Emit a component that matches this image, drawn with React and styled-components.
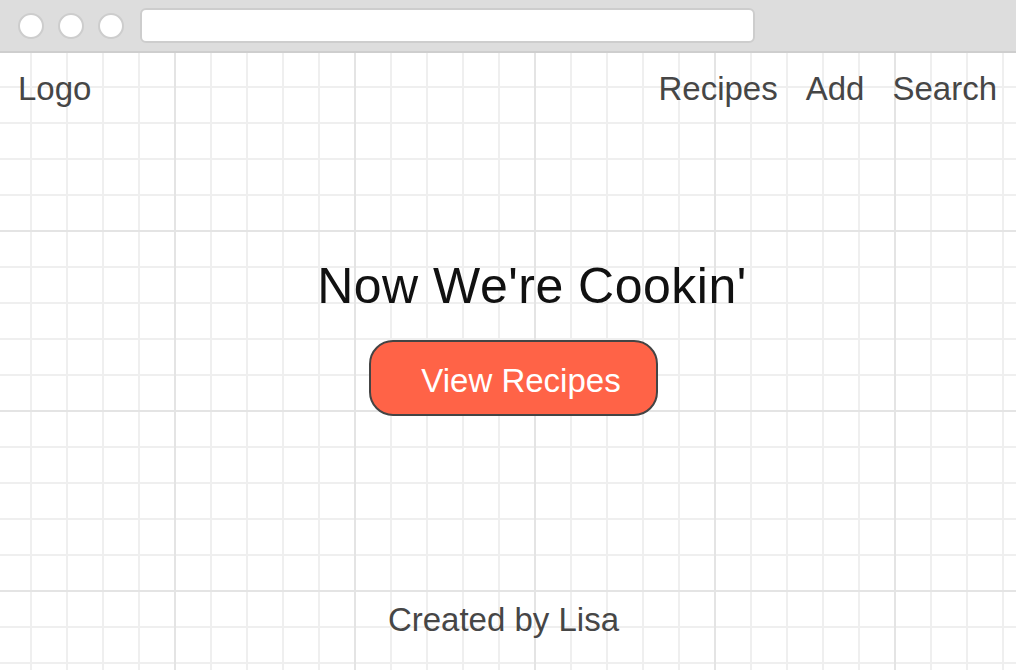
import React from 'react';
import styled, { createGlobalStyle } from 'styled-components';

const GlobalStyle = createGlobalStyle`
  html, body {
    margin: 0;
    padding: 0;
    background: #fff;
  }
  body {
    font-family: "Liberation Sans", Arial, sans-serif;
  }
`;

const Window = styled.div`
  width: 1016px;
  height: 670px;
  display: flex;
  flex-direction: column;
  overflow: hidden;
`;

const Chrome = styled.div`
  height: 51px;
  flex-shrink: 0;
  background: #dddddd;
  border-bottom: 2px solid #cecece;
  display: flex;
  align-items: center;
  gap: 14px;
  padding-left: 18px;
  box-sizing: content-box;
`;

const Dot = styled.span`
  width: 22px;
  height: 22px;
  border-radius: 50%;
  background: #fff;
  border: 2px solid #cdcdcd;
`;

const AddressBar = styled.div`
  margin-left: 2px;
  width: 611px;
  height: 31px;
  border-radius: 6px;
  background: #fff;
  border: 2px solid #cdcdcd;
`;

const Page = styled.div`
  flex: 1;
  display: flex;
  flex-direction: column;
  background-color: #fff;
  background-image:
    linear-gradient(to right, #e4e4e4 2px, transparent 2px),
    linear-gradient(to bottom, #e4e4e4 2px, transparent 2px),
    linear-gradient(to right, #efefef 2px, transparent 2px),
    linear-gradient(to bottom, #efefef 2px, transparent 2px);
  background-size: 180px 180px, 180px 180px, 36px 36px, 36px 36px;
  background-position: 174px 0, 0 177px, 30px 0, 0 33px;
`;

const Nav = styled.nav`
  display: flex;
  align-items: center;
  justify-content: space-between;
  padding: 17px 19px 0 18px;
  font-size: 33px;
  color: #464646;
`;

const NavLinks = styled.div`
  display: flex;
  gap: 28px;
`;

const NavLink = styled.span`
  color: inherit;
`;

const Hero = styled.main`
  display: flex;
  flex-direction: column;
  align-items: center;
  padding-top: 149px;
`;

const Title = styled.h1`
  margin: 0 0 0 48px;
  font-size: 50px;
  font-weight: normal;
  letter-spacing: 0.5px;
  color: #111;
`;

const CTA = styled.button`
  margin: 25px 0 0 11px;
  padding: 20px 35px 14px 50px;
  font-family: inherit;
  font-size: 33px;
  line-height: normal;
  color: #fff;
  background: #ff6347;
  border: 2px solid #444;
  border-radius: 24px;
  cursor: pointer;
`;

const Footer = styled.footer`
  margin: 185px 9px 0 0;
  text-align: center;
  font-size: 33px;
  color: #464646;
`;

export default function App() {
  return (
    <>
      <GlobalStyle />
      <Window>
        <Chrome>
          <Dot />
          <Dot />
          <Dot />
          <AddressBar />
        </Chrome>
        <Page>
          <Nav>
            <NavLink>Logo</NavLink>
            <NavLinks>
              <NavLink>Recipes</NavLink>
              <NavLink>Add</NavLink>
              <NavLink>Search</NavLink>
            </NavLinks>
          </Nav>
          <Hero>
            <Title>Now We're Cookin'</Title>
            <CTA>View Recipes</CTA>
          </Hero>
          <Footer>Created by Lisa</Footer>
        </Page>
      </Window>
    </>
  );
}
